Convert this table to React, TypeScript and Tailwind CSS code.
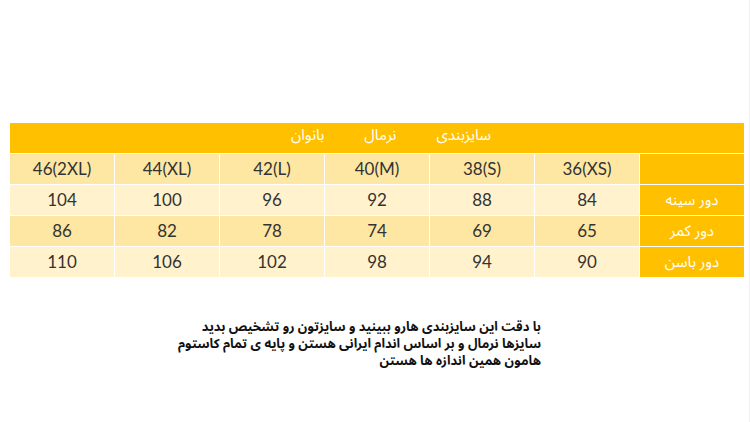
const sizes = ["36(XS)", "38(S)", "40(M)", "42(L)", "44(XL)", "46(2XL)"];

const rows = [
  { label: "دور سینه", values: [84, 88, 92, 96, 100, 104], bg: "bg-[#fff2cd]" },
  { label: "دور کمر", values: [65, 69, 74, 78, 82, 86], bg: "bg-[#fee6a3]" },
  { label: "دور باسن", values: [90, 94, 98, 102, 106, 110], bg: "bg-[#fff2cd]" },
];

const cell = "h-[30px] flex items-center justify-center text-[17px] text-[#333]";

const App = () => {
  return (
    <div className="w-[750px] h-[422px] bg-white border-r border-[#f0f0f0] overflow-hidden font-['Lato','DejaVu_Sans',sans-serif]">
      <div className="pt-[123px] pl-[10px] w-[744px]">
        <div dir="rtl" className="grid grid-cols-7 gap-px bg-white">
          {/* title row */}
          <div className="col-span-7 h-[30px] bg-[#ffc000] flex items-center justify-center gap-[40px] pl-[28px] pb-[6px] text-white text-[15px] font-['Noto_Sans_Arabic','DejaVu_Sans',sans-serif]">
            <span>سایزبندی</span>
            <span>نرمال</span>
            <span>بانوان</span>
          </div>

          {/* size row */}
          <div className="h-[30px] bg-[#ffc000]" />
          {sizes.map((s) => (
            <div key={s} dir="ltr" className={cell + " bg-[#fee6a3]"}>
              {s}
            </div>
          ))}

          {rows.map((row) => (
            <>
              <div
                key={row.label}
                className="h-[30px] bg-[#ffc000] flex items-center justify-center text-white text-[15px] font-['Noto_Sans_Arabic','DejaVu_Sans',sans-serif]"
              >
                {row.label}
              </div>
              {row.values.map((v, i) => (
                <div key={row.label + i} className={cell + " " + row.bg}>
                  {v}
                </div>
              ))}
            </>
          ))}
        </div>
      </div>

      <div dir="rtl" className="mt-[42px] w-[541px] text-right font-bold text-[13px] leading-[17px] text-[#111] font-['Noto_Sans_Arabic','Noto_Naskh_Arabic','DejaVu_Sans',sans-serif]">
        <p>با دقت این سایزبندی هارو ببینید و سایزتون رو تشخیص بدید</p>
        <p>سایزها نرمال و بر اساس اندام ایرانی هستن و پایه ی تمام کاستوم</p>
        <p>هامون همین اندازه ها هستن</p>
      </div>
    </div>
  );
};

export default App;
